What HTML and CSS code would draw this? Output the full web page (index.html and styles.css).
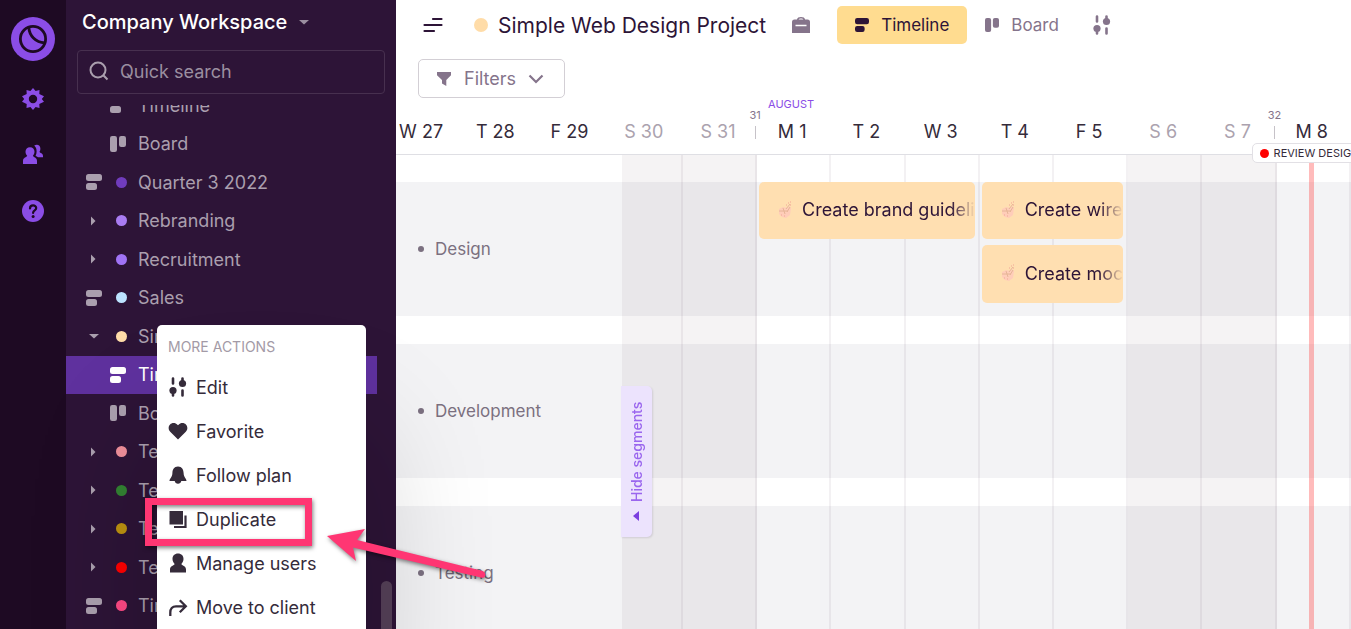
FILE: index.html
```html
<!DOCTYPE html>
<html lang="en">
<head>
    <meta charset="UTF-8">
    <meta name="viewport" content="width=device-width, initial-scale=1.0">
    <title>Simple Web Design Project</title>
    <link rel="stylesheet" href="styles.css">
</head>
<body>
    <!-- Shared icons -->
    <svg class="sprite" aria-hidden="true">
        <symbol id="i-timeline" viewBox="0 0 16 16"><rect width="16" height="7" rx="2.5"/><rect y="9" width="11" height="7" rx="2.5"/></symbol>
        <symbol id="i-board" viewBox="0 0 16 16"><rect width="7" height="16" rx="2.2"/><rect x="9" width="7" height="11" rx="2.2"/></symbol>
        <symbol id="i-sliders" viewBox="0 0 18 20"><path d="M4 1.500v5M4 16v2.500M13.500 1.500v3M13.500 13.500v5" fill="none" stroke="currentColor" stroke-width="2.600" stroke-linecap="round"/><circle cx="4" cy="13.500" r="3.600"/><circle cx="13.500" cy="6.500" r="3.600"/></symbol>
        <symbol id="i-right" viewBox="0 0 16 16"><path d="M5 3.500v9l4.500-4.500z"/></symbol>
        <symbol id="i-down" viewBox="0 0 16 16"><path d="M3 6h10l-5 4.500z"/></symbol>
        <symbol id="i-hand" viewBox="0 0 14 18"><path d="M1 8l4-2 4 1 2-2 2 2-1 7-4 3-4-1-3-3z" fill="#ffcdb9"/><path d="M1 10h9M5 7l2 6M8 8l4-5M12 6l-3 5" fill="none" stroke="#e6b596"/><path d="M10 2h1M12 1h1M8 4h1M12 4h1M3 14h1M6 15h1" stroke="#f0a596"/></symbol>
    </svg>

    <!-- Left rail -->
    <nav class="rail" aria-label="Main">
        <a href="#" class="logo" aria-label="Home">
            <svg viewBox="0 0 44 44" fill="none" stroke="#1e0a23" stroke-width="2.800"><circle cx="22" cy="22" r="22" fill="#8b4de6" stroke="none"/><circle cx="22" cy="22" r="12.600"/><path d="M17.800 10.200c.500 8.500 6.500 15.300 16 15.600"/></svg>
        </a>
        <a href="#" aria-label="Settings">
            <svg viewBox="0 0 22 22"><path fill-rule="evenodd" d="M11 0l2.600 3 3.900-1-.2 3.900L22 8.200 19.800 11l2.200 2.800-4.700 2.300.2 3.900-3.900-1L11 22l-2.600-3-3.900 1 .2-3.900L0 13.800 2.200 11 0 8.200l4.700-2.300L4.500 2l3.900 1zM11 6.800a4.200 4.200 0 1 0 0 8.400 4.200 4.200 0 0 0 0-8.400z"/></svg>
        </a>
        <a href="#" aria-label="People">
            <svg viewBox="0 0 22 22"><path d="M8 3.200c2.800 0 4.500 1.900 4.500 4.500 0 1.800-.8 3-1.600 4 .5 1.600 4.100 1.700 4.100 5V20H1v-3.300c0-3.300 3.700-3.400 4.200-5-.9-1-1.700-2.200-1.700-4 0-2.600 1.700-4.500 4.500-4.500zM12.200 1.600c3.200-1.800 6.200-.2 6.200 3.100 0 1.300-.3 2.200-.9 3 .6 1.600 3.500 1.200 3.500 4.300v1.200h-5c-.8-.7-1.700-1-2.400-1.500 1.700-3.300 1.300-7.900-1.400-10.100z"/></svg>
        </a>
        <a href="#" aria-label="Help">
            <svg viewBox="0 0 22 22"><circle cx="11" cy="11" r="11"/><path d="M8 8.400c0-4 6.200-4 6.200-.3 0 2.400-3.100 2.200-3.100 4.800" fill="none" stroke="#1e0a23" stroke-width="2.200" stroke-linecap="round"/><circle cx="11.100" cy="16.500" r="1.500" fill="#1e0a23"/></svg>
        </a>
    </nav>

    <!-- Workspace sidebar -->
    <aside class="sidebar">
        <button class="workspace">Company Workspace <svg class="caret"><use href="#i-down"/></svg></button>
        <label class="search">
            <svg viewBox="0 0 20 20" fill="none" stroke="currentColor" stroke-width="2"><circle cx="9" cy="9" r="7.500"/><path d="M14.300 14.300l4.200 4.200"/></svg>
            <input type="search" placeholder="Quick search" aria-label="Quick search">
        </label>
        <div class="plans">
            <ul>
                <li class="sub"><a href="#"><svg><use href="#i-timeline"/></svg>Timeline</a></li>
                <li class="sub"><a href="#"><svg><use href="#i-board"/></svg>Board</a></li>
                <li><a href="#"><svg><use href="#i-timeline"/></svg><i class="dot violet"></i>Quarter 3 2022</a></li>
                <li><a href="#"><svg><use href="#i-right"/></svg><i class="dot lilac"></i>Rebranding</a></li>
                <li><a href="#"><svg><use href="#i-right"/></svg><i class="dot purple"></i>Recruitment</a></li>
                <li><a href="#"><svg><use href="#i-timeline"/></svg><i class="dot sky"></i>Sales</a></li>
                <li><a href="#"><svg><use href="#i-down"/></svg><i class="dot peach"></i>Simple Web Design</a></li>
                <li class="sub active"><a href="#"><svg><use href="#i-timeline"/></svg>Timeline</a></li>
                <li class="sub"><a href="#"><svg><use href="#i-board"/></svg>Board</a></li>
                <li><a href="#"><svg><use href="#i-right"/></svg><i class="dot rose"></i>Team</a></li>
                <li><a href="#"><svg><use href="#i-right"/></svg><i class="dot green"></i>Team</a></li>
                <li><a href="#"><svg><use href="#i-right"/></svg><i class="dot gold"></i>Team</a></li>
                <li><a href="#"><svg><use href="#i-right"/></svg><i class="dot red"></i>Team</a></li>
                <li><a href="#"><svg><use href="#i-timeline"/></svg><i class="dot pink"></i>Time</a></li>
            </ul>
            <span class="scrollbar"></span>
        </div>
    </aside>

    <main class="main">
        <header class="topbar">
            <button class="toggle" aria-label="Toggle sidebar">
                <svg viewBox="0 0 20 16" stroke="currentColor" stroke-width="2.200" stroke-linecap="round"><path d="M10 2h8.500M1.500 8h17M1.500 14h9.500"/></svg>
            </button>
            <h1><i class="dot peach"></i>Simple Web Design Project</h1>
            <button class="icon-btn" aria-label="Project details">
                <svg viewBox="0 0 18 18"><path fill-rule="evenodd" d="M5 3.500C5 .2 13 .2 13 3.500h2.500A2.500 2.500 0 0 1 18 6v11H0V6a2.500 2.500 0 0 1 2.500-2.500zM6.700 3.500h4.600c0-1.300-4.600-1.300-4.600 0zM3.500 8.800v1.500h11V8.800z"/></svg>
            </button>
            <button class="tab selected"><svg><use href="#i-timeline"/></svg>Timeline</button>
            <button class="tab"><svg><use href="#i-board"/></svg>Board</button>
            <button class="icon-btn views" aria-label="View settings"><svg><use href="#i-sliders"/></svg></button>
        </header>

        <div class="toolbar">
            <button class="filters">
                <svg viewBox="0 0 16 16"><path d="M1 1h14v3.200L10.300 9v6L6 12.500V9L1 4.200z"/></svg>
                Filters
                <svg viewBox="0 0 16 16" fill="none" stroke="currentColor" stroke-width="2.200"><path d="M1.500 4.500L8 11l6.500-6.500"/></svg>
            </button>
        </div>

        <section class="timeline">
            <div class="days">
                <div>W 27</div>
                <div>T 28</div>
                <div>F 29</div>
                <div class="weekend">S 30</div>
                <div class="weekend">S 31</div>
                <div><span class="month">AUGUST</span><span class="week">31</span>M 1</div>
                <div>T 2</div>
                <div>W 3</div>
                <div>T 4</div>
                <div>F 5</div>
                <div class="weekend">S 6</div>
                <div class="weekend">S 7</div>
                <div><span class="week">32</span>M 8<span class="milestone"><i class="dot red"></i>REVIEW DESIGN</span></div>
                <div></div>
            </div>

            <div class="board">
                <div class="tracks">
                    <div class="track">
                        <div class="task brand"><svg><use href="#i-hand"/></svg><span>Create brand guidelines</span></div>
                        <div class="task wire"><svg><use href="#i-hand"/></svg><span>Create wireframes</span></div>
                        <div class="task mock"><svg><use href="#i-hand"/></svg><span>Create mockups</span></div>
                    </div>
                    <div class="track"></div>
                    <div class="track"></div>
                </div>
                <div class="columns">
                    <i></i><i></i><i></i><i class="weekend"></i><i class="weekend"></i><i></i><i></i>
                    <i></i><i></i><i></i><i class="weekend"></i><i class="weekend"></i><i class="due"></i><i></i>
                </div>
                <div class="segments">
                    <div class="segment">Design</div>
                    <div class="segment">Development</div>
                    <div class="segment">Testing</div>
                    <button class="hide-segments">
                        <svg viewBox="0 0 8 10"><path d="M1 0v10l6-5z"/></svg>
                        Hide segments
                    </button>
                </div>
            </div>
        </section>
    </main>

    <!-- Plan context menu -->
    <div class="menu">
        <h2>MORE ACTIONS</h2>
        <button><svg><use href="#i-sliders"/></svg>Edit</button>
        <button><svg viewBox="0 0 20 20"><path d="M10 18.500L2.200 10.800C-2.500 5.500 4.500-1.500 10 4.300c5.500-5.800 12.500 1.200 7.800 6.500z"/></svg>Favorite</button>
        <button><svg viewBox="0 0 20 20"><path d="M10 1.500c4 0 5.500 3 5.600 6.500.1 4.500 2.900 5.500 2.900 8h-5.200c-.4 1.700-1.600 2.700-3.300 2.700S7.100 17.700 6.700 16H1.500c0-2.500 2.800-3.500 2.900-8C4.500 4.500 6 1.500 10 1.500z"/></svg>Follow plan</button>
        <button><svg viewBox="0 0 20 20"><rect x="1.500" y="2" width="13.500" height="13.500"/><path d="M17.500 6.500V18H6" fill="none" stroke="currentColor" stroke-width="2.200"/></svg>Duplicate</button>
        <button><svg viewBox="0 0 20 20"><path d="M10 .5c3.400 0 5.500 2.300 5.500 5.500 0 2.100-1 3.800-2.200 5 .5 1.800 4.700 1.800 4.700 5.500v3H2v-3C2 12.800 6.200 12.800 6.700 11 5.500 9.800 4.500 8.100 4.500 6 4.500 2.800 6.600.5 10 .5z"/></svg>Manage users</button>
        <button><svg viewBox="0 0 20 20" fill="none" stroke="currentColor" stroke-width="2.300"><path d="M2.300 19v-3.500c0-3.500 2-6.200 5.700-6.200h9M11.800 3.300l6 6-6 6"/></svg>Move to client</button>
    </div>

    <!-- Callout -->
    <div class="highlight"></div>
    <svg class="arrow" viewBox="0 0 164 60"><path fill="#ff3673" d="M1 11L39 4l-8 11L157 46q5 4 0 7L27 22.500l3 13.500z"/></svg>
</body>
</html>
```

FILE: styles.css
```css
/* General Reset */
* {
    margin: 0;
    padding: 0;
    box-sizing: border-box;
}
body {
    font-family: Inter, "Liberation Sans", sans-serif;
    font-size: 18px;
    color: #2d1437;
    background: #fff;
    display: flex;
    height: 100vh;
    overflow: hidden;
    position: relative;
}
a {
    color: inherit;
    text-decoration: none;
}
button, input {
    font: inherit;
    color: inherit;
    background: none;
    border: none;
    outline: none;
}
button {
    cursor: pointer;
}
svg {
    fill: currentColor;
    flex-shrink: 0;
}
svg[fill="none"] {
    fill: none;
}
.sprite {
    position: absolute;
    width: 0;
    height: 0;
}
.dot {
    width: 11px;
    height: 11px;
    border-radius: 50%;
    flex-shrink: 0;
}
.violet { background: #703cbc; }
.lilac { background: #a97cf2; }
.purple { background: #a073f5; }
.sky { background: #bce3ff; }
.peach { background: #ffdca8; }
.rose { background: #f0909b; }
.green { background: #338333; }
.gold { background: #bd9210; }
.red { background: #ff0000; }
.pink { background: #ff4a85; }

/* Left rail */
.rail {
    width: 66px;
    flex-shrink: 0;
    background: #1e0a23;
    color: #8b4de6;
    display: flex;
    flex-direction: column;
    align-items: center;
    gap: 34px;
    padding-top: 17px;
}
.rail a {
    height: 22px;
}
.rail svg {
    width: 22px;
    height: 22px;
}
.rail .logo {
    height: 44px;
    margin-bottom: -7px;
}
.rail .logo svg {
    width: 44px;
    height: 44px;
}

/* Sidebar */
.sidebar {
    width: 330px;
    flex-shrink: 0;
    background: #2d1437;
    color: #aa9fae;
    display: flex;
    flex-direction: column;
}
.workspace {
    display: flex;
    align-items: center;
    gap: 9px;
    height: 50px;
    padding: 0 16px 6px;
    font-size: 20px;
    font-weight: 500;
    color: #fff;
}
.workspace .caret {
    width: 16px;
    height: 16px;
    color: #9b8fa0;
}
.search {
    display: flex;
    align-items: center;
    gap: 11px;
    height: 44px;
    margin: 0 11px 11px;
    padding: 0 11px 2px;
    border: 1px solid #47304f;
    border-radius: 4px;
}
.search svg {
    width: 20px;
    height: 20px;
}
.search input {
    flex: 1;
    min-width: 0;
}
.search input::placeholder {
    color: #9b8fa0;
    opacity: 1;
}
.plans {
    flex: 1;
    min-height: 0;
    overflow: hidden;
    position: relative;
}
.plans ul {
    list-style: none;
    display: grid;
    grid-auto-rows: 1fr;
    height: 539px;
    margin: -19px 19px 0 0;
}
.plans a {
    display: flex;
    align-items: center;
    height: 100%;
    padding-left: 20px;
}
.plans svg {
    width: 16px;
    height: 16px;
    margin-right: 14px;
}
.plans .dot {
    margin-right: 11px;
}
.plans .sub a {
    padding-left: 44px;
}
.plans .sub svg {
    margin-right: 12px;
}
.plans .active {
    background: #5f319e;
    color: #fff;
}
.scrollbar {
    position: absolute;
    top: 476px;
    right: 4px;
    width: 11px;
    height: 100px;
    border-radius: 6px;
    background: #564159;
}

/* Top bar */
.main {
    flex: 1;
    min-width: 0;
    display: flex;
    flex-direction: column;
}
.topbar {
    display: flex;
    align-items: center;
    height: 50px;
    padding-left: 27px;
    color: #85748b;
}
.toggle {
    display: flex;
    color: #2d1437;
}
.toggle svg {
    width: 20px;
    height: 16px;
}
h1 {
    display: flex;
    align-items: center;
    gap: 10px;
    margin: 0 26px 0 31px;
    font-size: 21px;
    font-weight: 400;
    color: #2d1437;
    white-space: nowrap;
}
h1 .dot {
    width: 14px;
    height: 14px;
}
.icon-btn {
    display: flex;
}
.icon-btn svg {
    width: 18px;
    height: 20px;
}
.icon-btn.views {
    margin-left: 16px;
}
.tab {
    display: flex;
    align-items: center;
    gap: 12px;
    height: 38px;
    padding: 0 18px;
    border-radius: 5px;
    font-size: 17px;
}
.tab svg {
    width: 14px;
    height: 14px;
}
.tab.selected {
    background: #ffdc90;
    color: #2d1437;
    margin-left: 27px;
}
.toolbar {
    padding: 9px 22px 0;
}
.filters {
    display: flex;
    align-items: center;
    gap: 12px;
    height: 39px;
    padding: 0 20px 0 17px;
    border: 1px solid #d3cfd5;
    border-radius: 5px;
    color: #85748b;
}
.filters svg {
    width: 16px;
    height: 16px;
}

/* Timeline */
.timeline {
    flex: 1;
    min-height: 0;
    display: flex;
    flex-direction: column;
    overflow: hidden;
}
/* first and last days run past the edges of the view */
.days, .columns, .track {
    display: grid;
    grid-template-columns: repeat(14, minmax(0, 1fr));
    margin: 0 -73px 0 -11px;
}
.days {
    position: relative;
    z-index: 2;
    height: 57px;
    border-bottom: 1px solid #dfdfe4;
}
.days > div {
    position: relative;
    padding: 23px 2px 0 0;
    text-align: center;
    line-height: 22px;
    color: #352b3a;
}
.days .weekend {
    color: #aba2ae;
}
.month {
    position: absolute;
    top: 0;
    left: 12px;
    font-size: 11px;
    line-height: 12px;
    color: #8b4de6;
}
.week {
    position: absolute;
    top: 11px;
    left: -8px;
    width: 14px;
    font-size: 11px;
    line-height: 12px;
    color: #85748b;
}
.week::after {
    content: "";
    display: block;
    width: 1px;
    height: 13px;
    margin: 5px auto 0;
    background: #c6c2c8;
}
.milestone {
    position: absolute;
    top: 45px;
    left: -24px;
    display: flex;
    align-items: center;
    gap: 5px;
    height: 20px;
    padding: 0 7px;
    border: 1px solid #e2e0e5;
    border-radius: 5px;
    background: #fff;
    font-size: 11px;
    white-space: nowrap;
}
.milestone .dot {
    width: 9px;
    height: 9px;
}
.board {
    flex: 1;
    min-height: 0;
    display: grid;
    grid-template: 100% / 100%;
}
.tracks, .columns, .segments {
    grid-area: 1 / 1;
}
.tracks {
    padding-top: 27px;
}
.track {
    grid-template-rows: 57px 58px;
    row-gap: 6px;
    height: 134px;
    margin-bottom: 28px;
    background: #f3f3f5;
}
.task {
    position: relative;
    z-index: 1;
    display: flex;
    align-items: center;
    gap: 10px;
    margin: 0 4px 0 3px;
    padding: 0 0 2px 19px;
    border-radius: 5px;
    background: #ffdfb1;
    white-space: nowrap;
    overflow: hidden;
}
.task svg {
    width: 14px;
    height: 18px;
}
.task span {
    flex: 1;
    overflow: hidden;
    mask-image: linear-gradient(to left, transparent, #000 24px);
}
.brand { grid-area: 1 / 6 / auto / span 3; }
.wire { grid-area: 1 / 9 / auto / span 2; }
.mock { grid-area: 2 / 9 / auto / span 2; }
.columns {
    margin: 0 -74px 0 -10px;
}
.columns i {
    border-right: 2px solid rgba(50, 25, 45, 0.06);
    position: relative;
}
.columns .weekend {
    background: rgba(50, 20, 40, 0.05);
}
.due::before {
    content: "";
    position: absolute;
    top: 0;
    bottom: 0;
    left: 32px;
    width: 5px;
    background: rgba(255, 60, 60, 0.35);
}

/* Segments */
.segments {
    position: relative;
    z-index: 1;
    width: 226px;
    padding-top: 27px;
    background: #fff;
}
.segment {
    display: flex;
    align-items: center;
    gap: 11px;
    height: 134px;
    margin-bottom: 28px;
    padding-left: 22px;
    background: #f3f3f5;
    color: #7b7080;
    font-size: 17px;
}
.segment::before {
    content: "";
    width: 6px;
    height: 6px;
    border-radius: 50%;
    background: #7b7080;
}
.hide-segments {
    position: absolute;
    top: 231px;
    left: 225px;
    display: flex;
    align-items: center;
    justify-content: center;
    gap: 9px;
    width: 31px;
    height: 151px;
    border-radius: 5px 0 0 5px;
    background: #ece3fd;
    color: #9a66ee;
    font-size: 14px;
    font-weight: 500;
    writing-mode: vertical-rl;
    transform: rotate(180deg);
    box-shadow: -1px -1px 2px rgba(45, 20, 55, 0.12);
}
.hide-segments svg {
    width: 8px;
    height: 10px;
    transform: none;
    color: #7b3fe0;
}

/* Context menu */
.menu {
    position: absolute;
    z-index: 5;
    top: 325px;
    left: 157px;
    width: 209px;
    padding: 13px 0;
    border-radius: 5px;
    background: #fff;
    box-shadow: 0 110px 130px rgba(0, 0, 0, 0.2);
}
.menu h2 {
    padding-left: 11px;
    margin-bottom: 10px;
    font-size: 14px;
    font-weight: 400;
    line-height: 17px;
    color: #a39aa6;
}
.menu button {
    display: flex;
    align-items: center;
    gap: 8px;
    width: 100%;
    height: 44px;
    padding-left: 11px;
    color: #352b3a;
}
.menu svg {
    width: 20px;
    height: 20px;
}

/* Callout */
.highlight {
    position: absolute;
    z-index: 6;
    top: 498px;
    left: 145px;
    width: 167px;
    height: 48px;
    border: 7px solid #ff3673;
    filter: drop-shadow(1px 2px 2px rgba(0, 0, 0, 0.5));
    pointer-events: none;
}
.arrow {
    position: absolute;
    z-index: 6;
    top: 525px;
    left: 326px;
    width: 164px;
    height: 60px;
    filter: drop-shadow(1px 2px 2px rgba(0, 0, 0, 0.5));
    pointer-events: none;
}
```
